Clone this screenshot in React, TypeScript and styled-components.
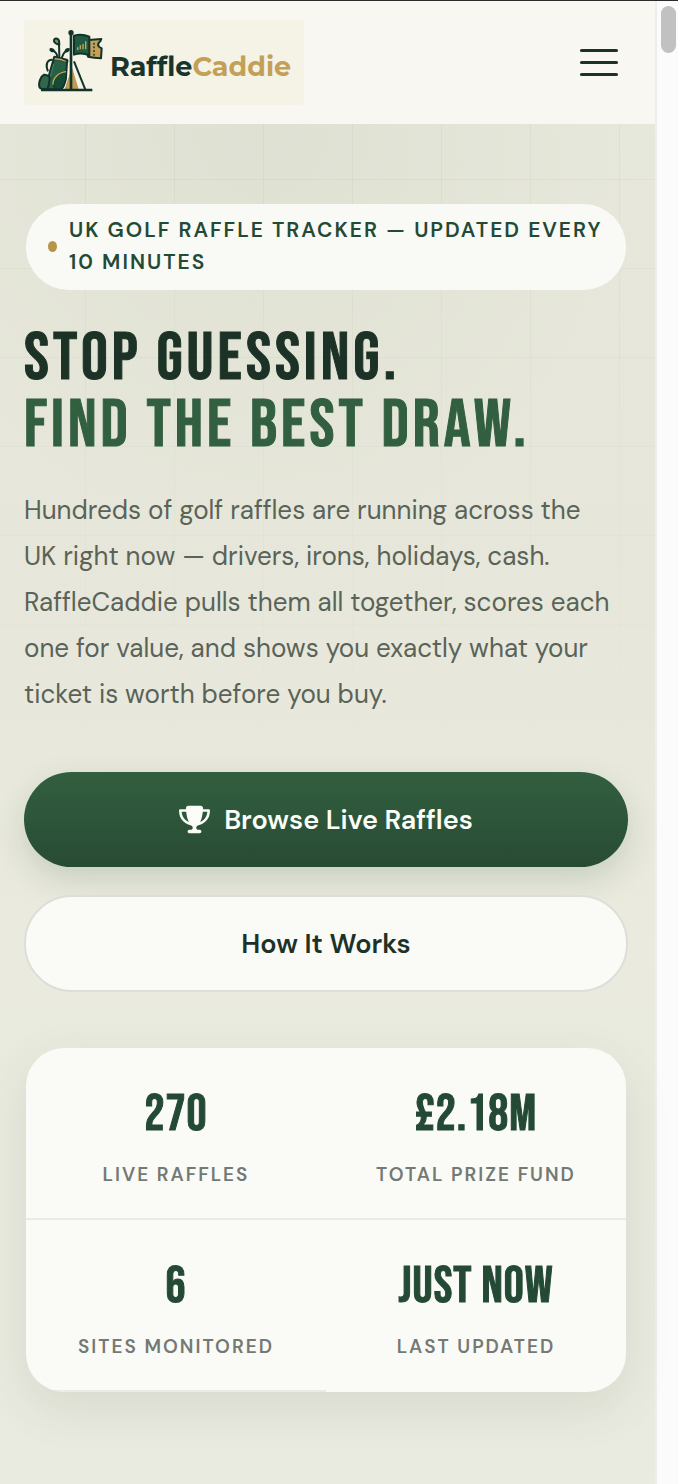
import React from "react";
import styled, { createGlobalStyle } from "styled-components";
import { FaTrophy } from "react-icons/fa6";

const body = `"DM Sans", Lato, "Liberation Sans", sans-serif`;
const display = `"Bebas Neue", Oswald, "Liberation Sans", sans-serif`;

const GlobalStyle = createGlobalStyle`
  *, *::before, *::after { box-sizing: border-box; }
  body {
    margin: 0;
    background: #e9eade;
    color: #1c3226;
    font-family: ${body};
  }
`;

const Shell = styled.div`
  display: flex;
  min-height: 100vh;
  border-top: 1px solid #2b2b2b;
`;

const Page = styled.div`
  display: flex;
  flex: 1;
  flex-direction: column;
  min-width: 0;
`;

const ScrollTrack = styled.div`
  flex: none;
  width: 23px;
  padding: 5px 2px 0 4px;
  border-left: 2px solid #ededeb;
  background: #fbfbfb;
`;

const ScrollThumb = styled.div`
  width: 15px;
  height: 47px;
  border-radius: 8px;
  background: #c1c1c1;
`;

const Header = styled.header`
  display: flex;
  align-items: center;
  justify-content: space-between;
  height: 123px;
  padding: 0 37px 0 24px;
  background: #f8f7f2;
`;

const Logo = styled.a`
  display: flex;
  align-items: center;
  gap: 6px;
  padding: 8px 13px 12px 14px;
  border-radius: 4px;
  background: #f5f2e6;
  color: #17352a;
  font-family: Montserrat, Inter, sans-serif;
  font-size: 27px;
  font-weight: 700;
  line-height: 36px;
  text-decoration: none;
`;

const LogoName = styled.span`
  padding-top: 12px;
`;

const LogoAccent = styled.span`
  color: #c3a057;
`;

const MenuButton = styled.button`
  display: flex;
  flex-direction: column;
  gap: 9px;
  padding: 0;
  border: 0;
  background: none;
`;

const MenuBar = styled.span`
  width: 38px;
  height: 3px;
  border-radius: 2px;
  background: #1c3226;
`;

const Hero = styled.main`
  position: relative;
  flex: 1;
  padding: 80px 27px 92px 24px;
  background:
    radial-gradient(ellipse 60% 30% at 40% 0, rgba(180, 188, 165, 0.16), transparent),
    linear-gradient(#e6e8db, #e6e7da 30%, #eaeade 60%, #e9eae0);

  &::before {
    content: "";
    position: absolute;
    inset: 0;
    background-image:
      linear-gradient(90deg, rgba(60, 90, 60, 0.05) 1px, transparent 1px),
      linear-gradient(rgba(60, 90, 60, 0.05) 1px, transparent 1px);
    background-position: 85px 55px;
    background-size: 89px 89px;
    mask-image: linear-gradient(#000, transparent 50%);
  }
`;

const HeroContent = styled.div`
  position: relative;
`;

const Badge = styled.p`
  display: flex;
  align-items: center;
  gap: 12px;
  margin: 0 2px;
  padding: 10px 22px 12px;
  border-radius: 43px;
  background: #f9faf5;
  color: #244a36;
  font-size: 21px;
  font-weight: 600;
  letter-spacing: 2px;
  line-height: 32px;
  text-transform: uppercase;
`;

const Dot = styled.span`
  flex: none;
  width: 9px;
  height: 11px;
  border-radius: 50%;
  background: #b6964a;
`;

const Title = styled.h1`
  margin: 36px 0 27px;
  font-family: ${display};
  font-size: 67px;
  font-weight: 400;
  letter-spacing: 4px;
  line-height: 67px;
  -webkit-text-stroke: 1px currentColor;
`;

const TitleLine = styled.span<{ $accent?: boolean }>`
  display: block;
  color: ${(p) => (p.$accent ? "#325f40" : "inherit")};
`;

const Lead = styled.p`
  margin: 0;
  padding-right: 12px;
  color: #5a6358;
  font-size: 26px;
  line-height: 46px;
`;

const Actions = styled.div`
  display: flex;
  flex-direction: column;
  gap: 28px;
  margin: 55px 0 56px;
`;

const Action = styled.a<{ $primary?: boolean }>`
  display: flex;
  align-items: center;
  justify-content: center;
  gap: 14px;
  height: ${(p) => (p.$primary ? 95 : 97)}px;
  border: ${(p) => (p.$primary ? "0" : "2px solid #dcdfd8")};
  border-radius: 48px;
  background: ${(p) => (p.$primary ? "linear-gradient(#325f3f, #284b34)" : "#fafaf7")};
  box-shadow: ${(p) => (p.$primary ? "0 12px 32px rgba(40, 90, 60, 0.18)" : "none")};
  color: ${(p) => (p.$primary ? "#fbfdf8" : "#1c3226")};
  font-size: 27px;
  font-weight: 600;
  text-decoration: none;
`;

const Stats = styled.dl`
  display: grid;
  grid-template-columns: 1fr 1fr;
  margin: 0 2px;
  overflow: hidden;
  border-radius: 38px;
  background: #fafaf7;
  box-shadow: 0 16px 48px rgba(60, 80, 55, 0.1);
`;

const Stat = styled.div<{ $divided: boolean }>`
  display: flex;
  flex-direction: column-reverse;
  align-items: center;
  gap: 18px;
  height: 172px;
  padding-bottom: 27px;
  border-bottom: 2px solid ${(p) => (p.$divided ? "#e9ebe5" : "transparent")};
`;

const StatValue = styled.dd`
  margin: 0;
  color: #244a36;
  font-family: ${display};
  font-size: 50px;
  font-weight: 400;
  letter-spacing: 1px;
  line-height: 52px;
  -webkit-text-stroke: 1px currentColor;
`;

const StatLabel = styled.dt`
  color: #737973;
  font-size: 19px;
  font-weight: 600;
  letter-spacing: 2px;
  line-height: 32px;
  text-transform: uppercase;
`;

const stats = [
  { label: "Live raffles", value: "270" },
  { label: "Total prize fund", value: "£2.18M" },
  { label: "Sites monitored", value: "6" },
  { label: "Last updated", value: "Just now" },
];

function LogoMark() {
  return (
    <svg width="66" height="65" viewBox="24 18 198 195" aria-hidden="true">
      <path d="M126 136 L146 202 H103 Z" fill="#c09a54" />
      <path d="M132 118 L166 203" stroke="#12332a" strokeWidth="6" />
      <path d="M121 138 L101 202" stroke="#f5f2e5" strokeWidth="5" />
      <g fill="none" stroke="#12332a" strokeWidth="6" strokeLinecap="round">
        <path d="M88 104 L87 64" />
        <path d="M82 104 Q81 92 67 84" />
        <path d="M96 106 Q99 94 110 85" />
      </g>
      <path d="M88 68 C79 67 70 61 72 54 C74 47 84 48 87 56 Z" fill="#8e8c62" stroke="#12332a" strokeWidth="6" strokeLinejoin="round" />
      <path d="M73 88 C66 90 59 86 61 81 C65 79 72 82 73 88 Z M106 88 C112 90 117 87 117 81 C112 79 107 82 106 88 Z" fill="#12332a" stroke="#12332a" strokeWidth="5" strokeLinejoin="round" />
      <path d="M68 113 C50 112 46 130 54 148" fill="none" stroke="#12332a" strokeWidth="6" />
      <path d="M73 104 L110 113 Q114 116 111 122 L109 149 Q109 184 94 202 H54 Q50 185 57 160 L66 128 Z" fill="#276145" stroke="#12332a" strokeWidth="6" strokeLinejoin="round" />
      <path d="M74 107 Q92 106 109 116 L107 121 Q88 113 72 114 Z" fill="#cba75b" stroke="#12332a" strokeWidth="2" />
      <path d="M71 126 L61 164" stroke="#4f7d62" strokeWidth="3" />
      <path d="M109 148 C82 148 62 178 75 201 H94 C107 187 110 167 109 148 Z" fill="#184b36" stroke="#12332a" strokeWidth="4" />
      <path d="M108 149 C84 151 68 170 69 188" fill="none" stroke="#cba75b" strokeWidth="4" />
      <path d="M42 158 C32 163 25 182 28 194 Q30 201 40 201 H52 Q58 190 59 166 Q52 157 42 158 Z" fill="#30664b" stroke="#12332a" strokeWidth="6" />
      <path d="M166 55 L214 51 Q212 59 207 61 Q201 69 208 75 L215 79 L213 109 Q192 108 174 104 Z" fill="#c4a057" stroke="#12332a" strokeWidth="6" strokeLinejoin="round" />
      <path d="M192 62 V102" stroke="#12332a" strokeWidth="4" strokeDasharray="6 5" />
      <path d="M132 41 Q155 34 178 44 V100 Q155 90 132 98 Z" fill="#205b41" stroke="#12332a" strokeWidth="6" strokeLinejoin="round" />
      <path d="M143 84 V76 M151 82 V70 M159 82 V66 M167 82 V58" stroke="#cba75b" strokeWidth="4" />
      <path d="M123 32 V204" stroke="#12332a" strokeWidth="8" />
      <circle cx="123" cy="32" r="8" fill="#12332a" />
      <path d="M33 204 H187" stroke="#12332a" strokeWidth="7" />
    </svg>
  );
}

export default function App() {
  return (
    <>
      <GlobalStyle />
      <Shell>
        <Page>
          <Header>
            <Logo href="#">
              <LogoMark />
              <LogoName>
                Raffle<LogoAccent>Caddie</LogoAccent>
              </LogoName>
            </Logo>
            <MenuButton type="button" aria-label="Open menu">
              <MenuBar />
              <MenuBar />
              <MenuBar />
            </MenuButton>
          </Header>
          <Hero>
            <HeroContent>
              <Badge>
                <Dot />
                <span>UK golf raffle tracker — updated every 10 minutes</span>
              </Badge>
              <Title>
                <TitleLine>Stop guessing.</TitleLine>
                <TitleLine $accent>Find the best draw.</TitleLine>
              </Title>
              <Lead>
                Hundreds of golf raffles are running across the UK right now — drivers, irons, holidays, cash.
                RaffleCaddie pulls them all together, scores each one for value, and shows you exactly what your
                ticket is worth before you buy.
              </Lead>
              <Actions>
                <Action href="#raffles" $primary>
                  <FaTrophy size={31} aria-hidden="true" />
                  Browse Live Raffles
                </Action>
                <Action href="#how">How It Works</Action>
              </Actions>
              <Stats>
                {stats.map((s, i) => (
                  <Stat key={s.label} $divided={i < 3}>
                    <StatLabel>{s.label}</StatLabel>
                    <StatValue>{s.value}</StatValue>
                  </Stat>
                ))}
              </Stats>
            </HeroContent>
          </Hero>
        </Page>
        <ScrollTrack aria-hidden="true">
          <ScrollThumb />
        </ScrollTrack>
      </Shell>
    </>
  );
}
